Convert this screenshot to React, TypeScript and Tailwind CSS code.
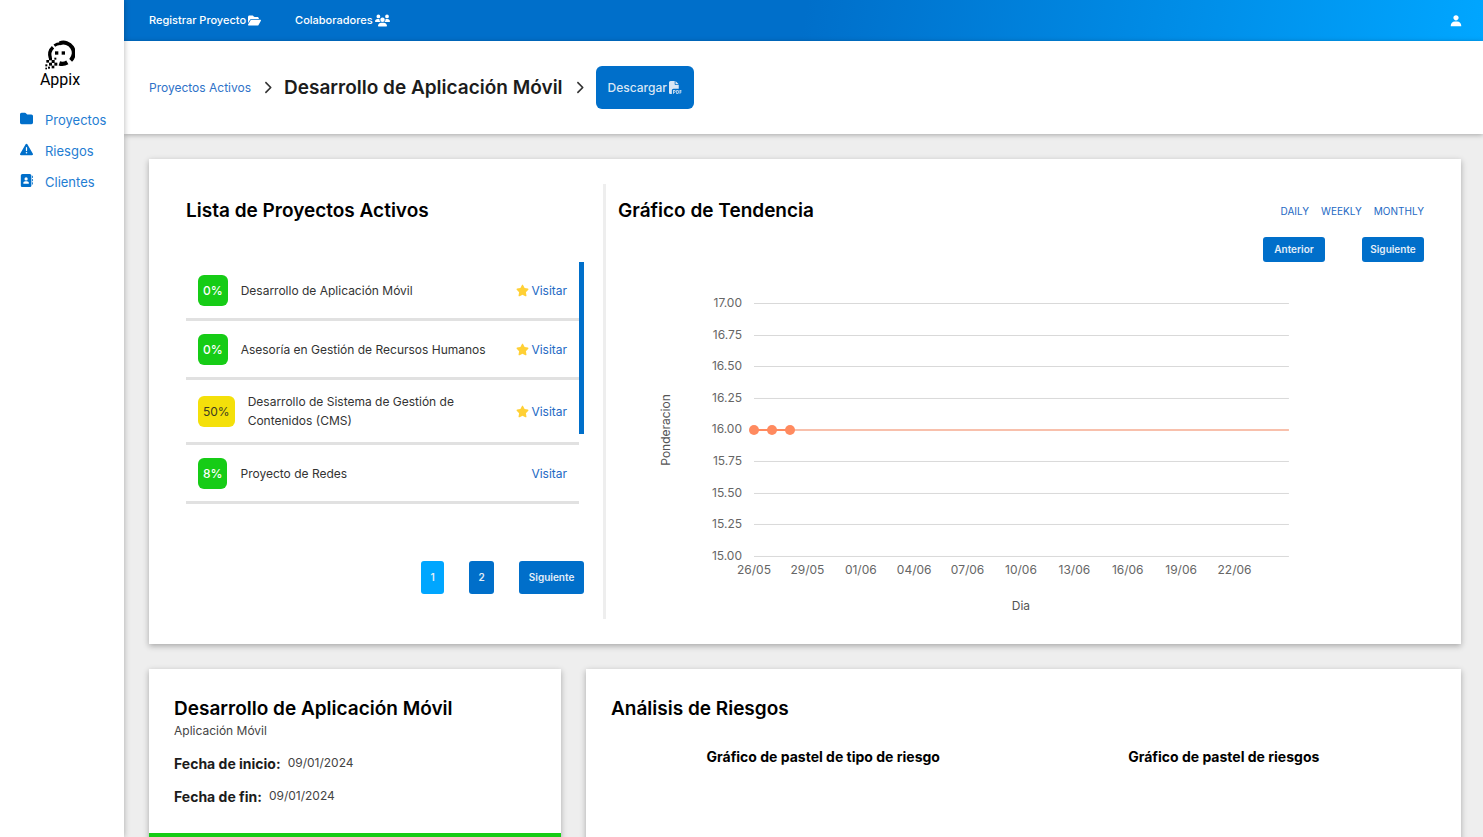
import {
  FaAddressBook,
  FaChevronRight,
  FaFilePdf,
  FaFolder,
  FaFolderOpen,
  FaStar,
  FaTriangleExclamation,
  FaUsers,
} from "react-icons/fa6";
import { BiSolidUser } from "react-icons/bi";

const projects = [
  { percent: "0%", name: "Desarrollo de Aplicación Móvil", starred: true, level: "low" },
  { percent: "0%", name: "Asesoría en Gestión de Recursos Humanos", starred: true, level: "low" },
  { percent: "50%", name: "Desarrollo de Sistema de Gestión de Contenidos (CMS)", starred: true, level: "mid" },
  { percent: "8%", name: "Proyecto de Redes", starred: false, level: "low" },
];

const yLabels = ["17.00", "16.75", "16.50", "16.25", "16.00", "15.75", "15.50", "15.25", "15.00"];
const xLabels = ["26/05", "29/05", "01/06", "04/06", "07/06", "10/06", "13/06", "16/06", "19/06", "22/06"];

function Logo() {
  return (
    <a href="#" className="flex flex-col items-center text-black">
      <svg viewBox="105 30 93 90" className="h-[30px] w-[31px]" aria-hidden="true">
        <g fill="none" stroke="#000">
          <path d="M136 47Q145 40 156 41" strokeWidth="8" />
          <path d="M152 40A31 31 0 0 1 185 91" strokeWidth="12" />
          <path d="M151 100Q163 104 175 97" strokeWidth="13" />
          <path d="M124 84Q118 65 132 52" strokeWidth="10" />
        </g>
        <g fill="#000">
          <rect x="138" y="64" width="10" height="10" />
          <rect x="158" y="64" width="10" height="10" />
          <rect x="120" y="82" width="9" height="9" />
          <rect x="128" y="90" width="9" height="9" />
          <rect x="136" y="83" width="6" height="6" />
          <rect x="112" y="90" width="8" height="8" />
          <rect x="120" y="98" width="9" height="9" />
          <rect x="136" y="98" width="9" height="9" />
          <rect x="109" y="103" width="6" height="6" />
          <rect x="128" y="107" width="8" height="8" />
          <rect x="117" y="110" width="6" height="6" />
          <rect x="109" y="113" width="5" height="5" />
        </g>
      </svg>
      <span className="font-['Roboto',sans-serif] text-[16px] leading-5">Appix</span>
    </a>
  );
}

function Sidebar() {
  const items = [
    { label: "Proyectos", Icon: FaFolder },
    { label: "Riesgos", Icon: FaTriangleExclamation },
    { label: "Clientes", Icon: FaAddressBook },
  ];
  return (
    <aside className="z-10 flex w-[124px] shrink-0 flex-col items-stretch bg-white pt-10 shadow-[0_0_6px_rgba(0,0,0,0.3)]">
      <div className="mr-1 flex justify-center">
        <Logo />
      </div>
      <nav className="mt-[15px] flex flex-col pl-5">
        {items.map(({ label, Icon }) => (
          <a key={label} href="#" className="flex h-[31px] items-center gap-3 text-[13px] text-[#1f7dd2]">
            <Icon className="mb-1 size-[13px] text-[#006fca]" />
            {label}
          </a>
        ))}
      </nav>
    </aside>
  );
}

function TrendChart() {
  return (
    <svg
      viewBox="0 0 806 345"
      role="img"
      aria-label="Gráfico de Tendencia"
      className="mt-2 h-auto w-full font-['Inter',sans-serif] text-[12px]"
    >
      {yLabels.map((label, i) => (
        <g key={label}>
          {label !== "16.00" && (
            <line
              x1="136"
              x2="671"
              y1={33.5 + Math.round(i * 31.6)}
              y2={33.5 + Math.round(i * 31.6)}
              stroke="#d9d9d9"
            />
          )}
          <text x="124" y={37.5 + Math.round(i * 31.6)} textAnchor="end" fill="#666">
            {label}
          </text>
        </g>
      ))}
      {xLabels.map((label, i) => (
        <text key={label} x={136 + i * 53.4} y="304" textAnchor="middle" fill="#666">
          {label}
        </text>
      ))}
      <line x1="136" x2="671" y1="160" y2="160" stroke="#f8c0ac" strokeWidth="2" />
      <line x1="136" x2="172" y1="160" y2="160" stroke="#ff8a5f" strokeWidth="2" />
      <circle cx="136" cy="160" r="5" fill="#ff8a5f" />
      <circle cx="154" cy="160" r="5" fill="#ff8a5f" />
      <circle cx="172" cy="160" r="5" fill="#ff8a5f" />
      <text x="403" y="340" textAnchor="middle" fill="#555">
        Dia
      </text>
      <text transform="translate(52 160) rotate(-90)" textAnchor="middle" fill="#555">
        Ponderacion
      </text>
    </svg>
  );
}

function ProjectList() {
  return (
    <div className="flex basis-[34%] flex-col px-3 pt-[15px]">
      <h2 className="text-[19px] leading-6 font-semibold text-black">Lista de Proyectos Activos</h2>
      <div className="mt-[39px] mr-[7px] flex">
        <ul className="grow">
          {projects.map((p) => (
            <li
              key={p.name}
              className="flex min-h-[59px] items-center border-b-3 border-[#e1e1e1] px-3 py-3 text-[12px] leading-[19px]"
            >
              <span
                className={
                  p.level === "mid"
                    ? "flex h-[31px] shrink-0 items-center rounded-md bg-[#f4e00a] px-[5px] text-[#3c3c20]"
                    : "flex h-[31px] shrink-0 items-center rounded-md bg-[#16cc16] px-[5px] font-medium text-white"
                }
              >
                {p.percent}
              </span>
              <span className="ml-[13px] w-[248px] text-[#333]">{p.name}</span>
              <a href="#" className="ml-auto flex items-center gap-[2px] text-[#2369c4]">
                {p.starred && <FaStar className="size-[13px] text-[#ffd035]" />}
                Visitar
              </a>
            </li>
          ))}
        </ul>
        <div className="h-[172px] w-[5px] shrink-0 bg-[#006fca]" />
      </div>
      <div className="mt-[57px] mr-[7px] flex h-[33px] justify-end gap-[25px] text-[10px] font-semibold text-[#e4eef8]">
        <button className="w-[23px] rounded-[3px] bg-[#00a6ff]">1</button>
        <button className="w-[25px] rounded-[3px] bg-[#006fca]">2</button>
        <button className="w-[65px] rounded-[3px] bg-[#006fca]">Siguiente</button>
      </div>
    </div>
  );
}

export default function App() {
  return (
    <div className="flex h-screen overflow-hidden bg-[#eeeeee] font-['Inter',sans-serif]">
      <Sidebar />
      <div className="flex min-w-0 grow flex-col">
        <header className="flex h-[41px] shrink-0 items-center gap-[34px] bg-linear-100 from-[#006fca] from-50% to-[#00a6ff] pr-5 pl-[25px] text-[11px] font-medium text-white">
          <a href="#" className="flex items-center gap-[2px]">
            Registrar Proyecto <FaFolderOpen className="size-[13px]" />
          </a>
          <a href="#" className="flex items-center gap-[2px]">
            Colaboradores <FaUsers className="size-[15px]" />
          </a>
          <button aria-label="Cuenta" className="ml-auto">
            <BiSolidUser className="size-[14px]" />
          </button>
        </header>
        <div className="flex h-[93px] shrink-0 items-center bg-white pl-[25px] shadow-[0_1px_5px_rgba(0,0,0,0.3)]">
          <a href="#" className="text-[12px] text-[#2f72c8]">
            Proyectos Activos
          </a>
          <FaChevronRight className="mx-[10px] size-[13px] text-[#333]" />
          <h1 className="text-[19px] leading-6 font-semibold text-[#1c1c1c]">Desarrollo de Aplicación Móvil</h1>
          <FaChevronRight className="mx-[10px] size-[13px] text-[#333]" />
          <button className="flex h-[43px] items-center gap-[2px] rounded-md bg-[#006fca] px-3 text-[12px] font-medium text-[#d9e6f4]">
            Descargar <FaFilePdf className="size-[13px]" />
          </button>
        </div>
        <main className="min-h-0 grow overflow-y-auto pt-[25px] pr-[22px] pb-[25px] pl-[25px] [scrollbar-width:none]">
          <section className="flex bg-white p-[25px] shadow-[0_2px_6px_rgba(0,0,0,0.3)]">
            <ProjectList />
            <div className="w-[3px] shrink-0 bg-[#eeeeee]" />
            <div className="min-w-0 flex-1 px-3 pt-[15px] pb-1">
              <div className="flex items-center justify-between">
                <h2 className="text-[19px] leading-6 font-semibold text-black">Gráfico de Tendencia</h2>
                <div className="flex gap-3 text-[10px] text-[#2369c4]">
                  <button>DAILY</button>
                  <button>WEEKLY</button>
                  <button>MONTHLY</button>
                </div>
              </div>
              <div className="mt-[14px] flex h-[25px] justify-end gap-[37px] text-[10px] font-semibold text-[#e4eef8]">
                <button className="w-[62px] rounded-[3px] bg-[#006fca]">Anterior</button>
                <button className="w-[62px] rounded-[3px] bg-[#006fca]">Siguiente</button>
              </div>
              <TrendChart />
            </div>
          </section>
          <div className="mt-[25px] flex gap-[25px]">
            <section className="w-[31.4%] bg-white shadow-[0_2px_6px_rgba(0,0,0,0.3)]">
              <div className="px-[25px] pt-7 pb-[26px]">
                <h2 className="text-[19px] leading-6 font-semibold text-black">Desarrollo de Aplicación Móvil</h2>
                <p className="text-[12px] leading-[19px] text-[#444]">Aplicación Móvil</p>
                <dl className="mt-[14px] flex flex-col gap-[13px]">
                  <div className="flex gap-[7px] leading-5">
                    <dt className="text-[14px] font-bold text-[#1c1c1c]">Fecha de inicio:</dt>
                    <dd className="text-[12px] leading-[18px] text-[#444]">09/01/2024</dd>
                  </div>
                  <div className="flex gap-[7px] leading-5">
                    <dt className="text-[14px] font-bold text-[#1c1c1c]">Fecha de fin:</dt>
                    <dd className="text-[12px] leading-[18px] text-[#444]">09/01/2024</dd>
                  </div>
                </dl>
              </div>
              <div className="h-10 bg-[#16cc16]" />
            </section>
            <section className="flex-1 bg-white px-[25px] pt-7 pb-[26px] shadow-[0_2px_6px_rgba(0,0,0,0.3)]">
              <h2 className="text-[19px] leading-6 font-semibold text-black">Análisis de Riesgos</h2>
              <div className="mt-[26px] grid grid-cols-2 px-3 text-center text-[14px] leading-5 font-bold text-black">
                <h3>Gráfico de pastel de tipo de riesgo</h3>
                <h3>Gráfico de pastel de riesgos</h3>
              </div>
            </section>
          </div>
        </main>
      </div>
    </div>
  );
}
